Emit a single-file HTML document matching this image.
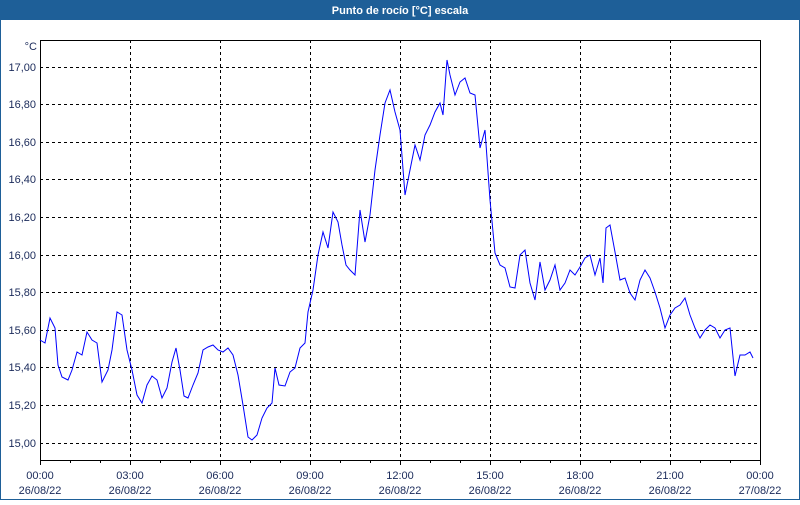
<!DOCTYPE html>
<html><head><meta charset="utf-8"><style>
body{margin:0;width:800px;height:500px;overflow:hidden;background:#fff;font-family:"Liberation Sans",sans-serif}
</style></head><body>
<svg width="800" height="500" xmlns="http://www.w3.org/2000/svg" font-family="Liberation Sans, sans-serif" font-size="11" shape-rendering="crispEdges">
<rect x="0" y="0" width="800" height="500" fill="#fff"/>
<rect x="0.5" y="0.5" width="799" height="499" fill="none" stroke="#1e5f98"/>
<rect x="0" y="0" width="800" height="20" fill="#1e5f98"/>
<text x="400" y="14" fill="#fff" font-weight="bold" font-size="11" text-anchor="middle">Punto de rocío [°C] escala</text>
<g stroke="#000" stroke-dasharray="3,3" stroke-width="1">
<line x1="40" y1="67.5" x2="760" y2="67.5"/><line x1="40" y1="104.5" x2="760" y2="104.5"/><line x1="40" y1="142.5" x2="760" y2="142.5"/><line x1="40" y1="179.5" x2="760" y2="179.5"/><line x1="40" y1="217.5" x2="760" y2="217.5"/><line x1="40" y1="255.5" x2="760" y2="255.5"/><line x1="40" y1="292.5" x2="760" y2="292.5"/><line x1="40" y1="330.5" x2="760" y2="330.5"/><line x1="40" y1="367.5" x2="760" y2="367.5"/><line x1="40" y1="405.5" x2="760" y2="405.5"/><line x1="40" y1="443.5" x2="760" y2="443.5"/>
<line x1="130.5" y1="40" x2="130.5" y2="460"/><line x1="220.5" y1="40" x2="220.5" y2="460"/><line x1="310.5" y1="40" x2="310.5" y2="460"/><line x1="400.5" y1="40" x2="400.5" y2="460"/><line x1="490.5" y1="40" x2="490.5" y2="460"/><line x1="580.5" y1="40" x2="580.5" y2="460"/><line x1="670.5" y1="40" x2="670.5" y2="460"/>
</g>
<rect x="40.5" y="40.5" width="720" height="420" fill="none" stroke="#000"/>
<g stroke="#000">
<path d="M40.5 460v5M70.5 460v3M100.5 460v3M130.5 460v5M160.5 460v3M190.5 460v3M220.5 460v5M250.5 460v3M280.5 460v3M310.5 460v5M340.5 460v3M370.5 460v3M400.5 460v5M430.5 460v3M460.5 460v3M490.5 460v5M520.5 460v3M550.5 460v3M580.5 460v5M610.5 460v3M640.5 460v3M670.5 460v5M700.5 460v3M730.5 460v3M760.5 460v5"/>
</g>
<polyline shape-rendering="auto" fill="none" stroke="#0000ff" stroke-width="1" points="40,340 45,343 50,318 55,328 58,365 62,377 68,380 72,370 77,352 82,355 87,332 92,340 97,343 102,382 108,370 112,350 117,312 122,315 127,350 132,370 137,395 142,403 147,385 152,376 157,380 162,398 167,388 172,362 176,348 180,370 184,396 188,398 193,385 198,373 203,350 208,347 213,345 218,350 223,352 228,348 233,355 238,375 243,405 248,437 252,440 257,435 262,418 267,408 272,403 275,368 279,385 285,386 290,372 295,368 300,348 305,343 308,312 313,290 318,255 323,232 328,248 333,212 338,222 342,245 346,265 350,270 355,275 360,210 365,242 370,215 375,170 380,135 385,103 390,90 395,112 400,130 405,195 410,170 415,145 420,160 425,135 430,125 435,112 440,103 443,115 447,60 450,75 455,95 460,82 465,78 470,93 475,95 480,148 485,130 490,200 495,253 500,265 505,268 510,287 515,288 520,255 525,250 530,283 535,300 540,262 545,290 550,280 555,265 560,290 565,283 570,270 575,275 580,267 585,258 590,255 595,275 600,258 603,283 606,228 610,225 615,252 620,280 625,278 630,293 635,300 640,280 645,270 650,278 655,292 660,308 665,328 670,315 675,308 680,305 685,298 690,315 695,328 700,338 705,330 710,325 715,328 720,338 725,330 730,328 735,376 740,355 745,355 750,352 753,358"/>
<g fill="#1a2a5a" text-anchor="end">
<text x="37" y="50">°C</text>
<text x="36" y="71">17,00</text><text x="36" y="108">16,80</text><text x="36" y="146">16,60</text><text x="36" y="183">16,40</text><text x="36" y="221">16,20</text><text x="36" y="259">16,00</text><text x="36" y="296">15,80</text><text x="36" y="334">15,60</text><text x="36" y="371">15,40</text><text x="36" y="409">15,20</text><text x="36" y="447">15,00</text>
</g>
<g fill="#1a2a5a" text-anchor="middle">
<text x="40" y="479">00:00</text><text x="40" y="494">26/08/22</text>
<text x="130" y="479">03:00</text><text x="130" y="494">26/08/22</text>
<text x="220" y="479">06:00</text><text x="220" y="494">26/08/22</text>
<text x="310" y="479">09:00</text><text x="310" y="494">26/08/22</text>
<text x="400" y="479">12:00</text><text x="400" y="494">26/08/22</text>
<text x="490" y="479">15:00</text><text x="490" y="494">26/08/22</text>
<text x="580" y="479">18:00</text><text x="580" y="494">26/08/22</text>
<text x="670" y="479">21:00</text><text x="670" y="494">26/08/22</text>
<text x="760" y="479">00:00</text><text x="760" y="494">27/08/22</text>
</g>
</svg>
</body></html>
